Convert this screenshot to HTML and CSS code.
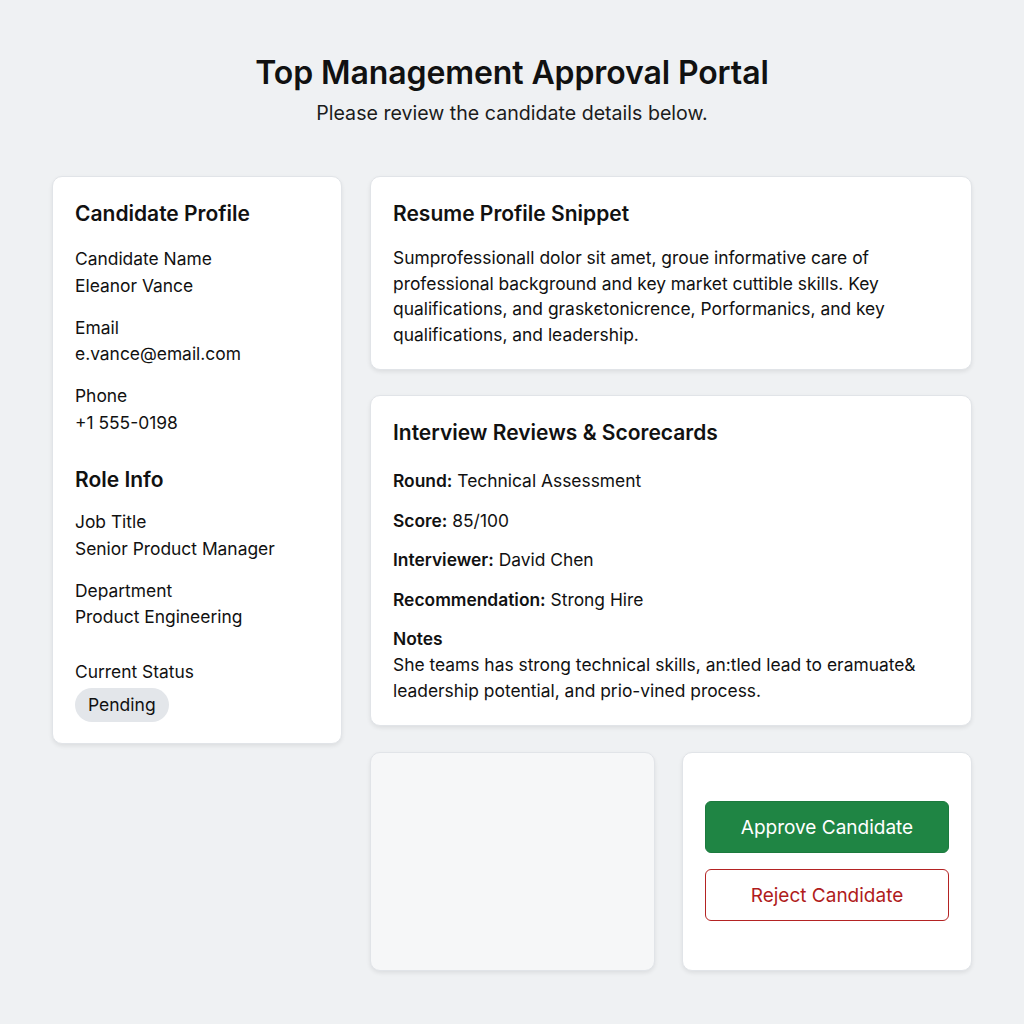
FILE: index.html
```html
<!DOCTYPE html>
<html>

<head>
  <title>Top Management Approval Portal</title>
  <link rel="stylesheet" href="styles.css">
</head>

<body>
  <div id="app-header">
    <h1>Top Management Approval Portal</h1>
    <p>Please review the candidate details below.</p>
  </div>
  <div id="app-main">
    <div class="card profile">
      <h2>Candidate Profile</h2>
      <div class="field">
        <span class="label">Candidate Name</span>
        <span class="value">Eleanor Vance</span>
      </div>
      <div class="field">
        <span class="label">Email</span>
        <span class="value">e.vance@email.com</span>
      </div>
      <div class="field">
        <span class="label">Phone</span>
        <span class="value">+1 555-0198</span>
      </div>
      <h2 class="section">Role Info</h2>
      <div class="field">
        <span class="label">Job Title</span>
        <span class="value">Senior Product Manager</span>
      </div>
      <div class="field">
        <span class="label">Department</span>
        <span class="value">Product Engineering</span>
      </div>
      <div class="field status">
        <span class="label">Current Status</span>
        <span class="pill">Pending</span>
      </div>
    </div>
    <div class="column">
      <div class="card resume">
        <h2>Resume Profile Snippet</h2>
        <p>Sumprofessionall dolor sit amet, groue informative care of professional background and key market cuttible skills. Key qualifications, and graskєtonicrence, Porformanics, and key qualifications, and leadership.</p>
      </div>
      <div class="card interview">
        <h2>Interview Reviews &amp; Scorecards</h2>
        <div class="row"><b>Round:</b> Technical Assessment</div>
        <div class="row"><b>Score:</b> 85/100</div>
        <div class="row"><b>Interviewer:</b> David Chen</div>
        <div class="row"><b>Recommendation:</b> Strong Hire</div>
        <div class="notes">
          <b>Notes</b>
          <p>She teams has strong technical skills, an:tled lead to eramuate&amp; leadership potential, and prio-vined process.</p>
        </div>
      </div>
      <div class="bottom">
        <div class="card blank"></div>
        <div class="card actions">
          <button class="approve">Approve Candidate</button>
          <button class="reject">Reject Candidate</button>
        </div>
      </div>
    </div>
  </div>
</body>

</html>
```

FILE: styles.css
```css
html, body {
  padding: 0;
  margin: 0;
  width: 100%;
  height: 100%;
  font-family: Inter, "Noto Sans", sans-serif;
  color: #111111;
  background: #eff1f3;
  overflow: hidden;
}
#app-header {
  text-align: center;
  padding-top: 52px;
}
#app-header h1 {
  margin: 0;
  font-size: 32px;
  font-weight: 600;
  letter-spacing: -0.1px;
  line-height: 42px;
}
#app-header p {
  margin: 0;
  margin-top: 6px;
  font-size: 19.6px;
  line-height: 26px;
  color: #1c1c1c;
}
#app-main {
  width: 920px;
  margin: 50px auto 0 auto;
  display: grid;
  grid-template-columns: 290px 1fr;
  gap: 28px;
  align-items: start;
}
.card {
  background: #ffffff;
  border: 1px solid #e1e4e8;
  border-radius: 10px;
  box-shadow: 0 2px 4px rgba(0, 0, 0, 0.08);
  box-sizing: border-box;
  padding: 23px 22px;
}
.card h2 {
  margin: 0;
  font-size: 21px;
  font-weight: 600;
  line-height: 28px;
}
.profile .field {
  display: flex;
  flex-direction: column;
  margin-top: 15.5px;
  font-size: 17.4px;
  line-height: 26.5px;
}
.profile h2 + .field {
  margin-top: 18px;
}
.profile .section + .field {
  margin-top: 15px;
}
.profile .section {
  margin-top: 30px;
}
.profile .status {
  margin-top: 28px;
}
.pill {
  align-self: flex-start;
  margin-top: 3px;
  padding: 3px 13px;
  border-radius: 17px;
  background: #e3e6ea;
  font-size: 17.5px;
  line-height: 28px;
}
.profile {
  padding-bottom: 21px;
}
.column {
  display: flex;
  flex-direction: column;
  gap: 25.5px;
}
.resume {
  padding-bottom: 21px;
}
.resume p {
  margin: 17px 0 0 0;
  font-size: 17.4px;
  line-height: 25.7px;
}
.interview {
  padding-top: 23px;
  padding-bottom: 22px;
}
.interview .row {
  font-size: 17.4px;
  line-height: 26px;
  margin-top: 13.5px;
}
.interview h2 + .row {
  margin-top: 21px;
}
.interview b {
  font-weight: 600;
}
.interview .notes {
  margin-top: 13.5px;
  font-size: 17.4px;
  line-height: 26px;
}
.interview .notes p {
  margin: 0;
  line-height: 25.5px;
}
.bottom {
  display: grid;
  grid-template-columns: 285px 1fr;
  gap: 27px;
  height: 219px;
}
.blank {
  background: #f6f7f8;
}
.actions {
  display: flex;
  flex-direction: column;
  justify-content: center;
  gap: 16px;
}
.actions button {
  height: 52px;
  border-radius: 6px;
  font-family: inherit;
  font-size: 19px;
  cursor: pointer;
}
.approve {
  background: #1f8544;
  border: 1px solid #1c7a3e;
  color: #ffffff;
}
.reject {
  background: #ffffff;
  border: 1.5px solid #b42323;
  color: #b01c1c;
}
```
